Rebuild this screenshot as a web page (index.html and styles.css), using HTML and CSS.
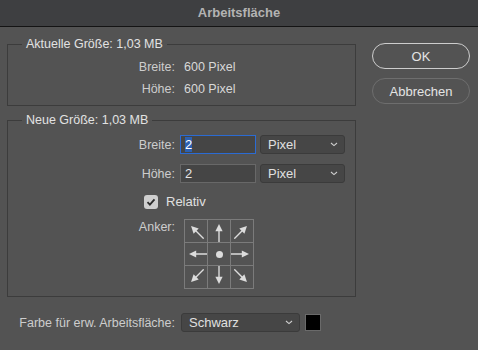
FILE: index.html
```html
<!DOCTYPE html>
<html lang="de">

<head>
    <meta charset="UTF-8">
    <meta name="viewport" content="width=device-width, initial-scale=1.0">
    <title>Arbeitsfläche</title>
    <link rel="stylesheet" href="styles.css">
</head>

<body>

    <svg width="0" height="0" class="defs">
        <symbol id="arrow" viewBox="0 0 22 22">
            <path d="M11 22V10" stroke="#dcdcdc" stroke-width="1.4" />
            <path d="M11 4L7.4 11.2H14.6Z" fill="#dcdcdc" />
        </symbol>
        <symbol id="chev" viewBox="0 0 8 5">
            <path d="M1 1l3 2.6L7 1" stroke="#cfcfcf" stroke-width="1.1" fill="none" />
        </symbol>
    </svg>

    <div class="titlebar">Arbeitsfläche</div>

    <div class="content">
        <div class="main">
            <fieldset class="group">
                <legend>Aktuelle Größe: 1,03 MB</legend>
                <div class="info">
                    <span class="label">Breite:</span>
                    <span class="value">600 Pixel</span>
                    <span class="label">Höhe:</span>
                    <span class="value">600 Pixel</span>
                </div>
            </fieldset>

            <fieldset class="group new">
                <legend>Neue Größe: 1,03 MB</legend>
                <div class="form">
                    <span class="label">Breite:</span>
                    <div class="field focus"><span class="selected">2</span></div>
                    <div class="select">Pixel<svg class="chev"><use href="#chev" /></svg></div>

                    <span class="label">Höhe:</span>
                    <div class="field">2</div>
                    <div class="select">Pixel<svg class="chev"><use href="#chev" /></svg></div>
                </div>

                <div class="check-row">
                    <span class="checkbox">
                        <svg viewBox="0 0 14 14"><path d="M3.5 7.2l2.4 2.5 4.6-5.4" stroke="#2c2c2c" stroke-width="1.8" fill="none" /></svg>
                    </span>
                    <span>Relativ</span>
                </div>

                <div class="anchor-row">
                    <span class="label">Anker:</span>
                    <div class="anchor">
                        <div class="cell"><svg class="arr nw"><use href="#arrow" /></svg></div>
                        <div class="cell"><svg class="arr"><use href="#arrow" /></svg></div>
                        <div class="cell"><svg class="arr ne"><use href="#arrow" /></svg></div>
                        <div class="cell"><svg class="arr w"><use href="#arrow" /></svg></div>
                        <div class="cell"><span class="dot"></span></div>
                        <div class="cell"><svg class="arr e"><use href="#arrow" /></svg></div>
                        <div class="cell"><svg class="arr sw"><use href="#arrow" /></svg></div>
                        <div class="cell"><svg class="arr s"><use href="#arrow" /></svg></div>
                        <div class="cell"><svg class="arr se"><use href="#arrow" /></svg></div>
                    </div>
                </div>
            </fieldset>

            <div class="farbe">
                <span class="label">Farbe für erw. Arbeitsfläche:</span>
                <div class="select">Schwarz<svg class="chev"><use href="#chev" /></svg></div>
                <span class="swatch"></span>
            </div>
        </div>

        <div class="side">
            <button class="button default">OK</button>
            <button class="button">Abbrechen</button>
        </div>
    </div>

</body>

</html>
```

FILE: styles.css
```css
* {
    box-sizing: border-box;
}

body {
    margin: 0;
    width: 478px;
    height: 350px;
    background-color: #535353;
    color: #d4d4d4;
    font-family: "Liberation Sans", Arial, sans-serif;
    font-size: 12.5px;
    overflow: hidden;
}

.defs {
    position: absolute;
}

.titlebar {
    height: 27px;
    line-height: 26px;
    background-color: #3e3f41;
    border-bottom: 1px solid #141414;
    text-align: center;
    font-weight: bold;
    font-size: 13px;
    color: #b3b3b3;
}

.content {
    display: flex;
    padding: 9px 0 0 7px;
}

.main {
    width: 349px;
}

.side {
    display: flex;
    flex-direction: column;
    gap: 9px;
    margin-left: 16px;
    padding-top: 7px;
}

/* groups */
.group {
    margin: 0;
    padding: 4px 0 5px;
    border: 1px solid #3c3c3c;
    min-width: 0;
}

.group legend {
    margin-left: 14px;
    padding: 0 4px;
    line-height: 16px;
    color: #e2e2e2;
}

.group.new {
    margin-top: 6px;
    padding: 7px 0 7px;
}

.label {
    text-align: right;
    padding-right: 1px;
    color: #cdcdcd;
}

.info {
    display: grid;
    grid-template-columns: 168px auto;
    column-gap: 8px;
    line-height: 22px;
}

.value {
    color: #d8d8d8;
}

.form {
    display: grid;
    grid-template-columns: 168px 76px 85px;
    grid-auto-rows: 19px;
    column-gap: 4px;
    row-gap: 10px;
    align-items: center;
}

.field {
    height: 19px;
    line-height: 17px;
    padding-left: 4px;
    background-color: #454545;
    border: 1px solid #686868;
    color: #e4e4e4;
    font-size: 13px;
}

.field.focus {
    border-color: #2b6bd3;
}

.selected {
    display: inline-block;
    line-height: 15px;
    background-color: #2c60b0;
    color: #fff;
}

.select {
    display: flex;
    align-items: center;
    justify-content: space-between;
    height: 19px;
    padding: 0 6px 0 7px;
    background-color: #464646;
    border: 1px solid #3b3b3b;
    border-radius: 3px;
    color: #e0e0e0;
    font-size: 13px;
}

.chev {
    width: 8px;
    height: 5px;
}

.check-row {
    display: flex;
    align-items: center;
    gap: 8px;
    margin: 11px 0 0 136px;
    line-height: 15px;
    color: #e0e0e0;
    font-size: 13px;
}

.checkbox {
    display: flex;
    width: 14px;
    height: 14px;
    background-color: #cfcfcf;
    border-radius: 3px;
}

.checkbox svg {
    width: 14px;
    height: 14px;
}

.anchor-row {
    display: grid;
    grid-template-columns: 168px auto;
    column-gap: 8px;
    margin-top: 10px;
}

.anchor-row .label {
    line-height: 16px;
}

.anchor {
    display: grid;
    grid-template-columns: repeat(3, 22px);
    grid-template-rows: repeat(3, 22px);
    gap: 1px;
    padding: 1px;
    width: 70px;
    background-color: #7b7b7b;
}

.cell {
    display: flex;
    align-items: center;
    justify-content: center;
    background-color: #535353;
}

.arr {
    width: 22px;
    height: 22px;
}

.arr.ne { transform: rotate(45deg); }
.arr.e { transform: rotate(90deg); }
.arr.se { transform: rotate(135deg); }
.arr.s { transform: rotate(180deg); }
.arr.sw { transform: rotate(225deg); }
.arr.w { transform: rotate(270deg); }
.arr.nw { transform: rotate(315deg); }

.dot {
    width: 7px;
    height: 7px;
    border-radius: 50%;
    background-color: #dcdcdc;
}

.farbe {
    display: grid;
    grid-template-columns: 168px 119px 16px;
    column-gap: 5px;
    align-items: center;
    margin-top: 16px;
    padding-left: 1px;
}

.farbe .select {
    padding-left: 7px;
}

.swatch {
    height: 17px;
    background-color: #000;
    border: 1px solid #6a6a6a;
}

/* buttons */
.button {
    width: 98px;
    height: 26px;
    background-color: #535353;
    border: 1px solid #6e6e6e;
    border-radius: 13px;
    color: #e4e4e4;
    font-family: "Liberation Sans", Arial, sans-serif;
    font-size: 13px;
    padding: 0;
}

.button.default {
    border-color: #cdcdcd;
}
```
